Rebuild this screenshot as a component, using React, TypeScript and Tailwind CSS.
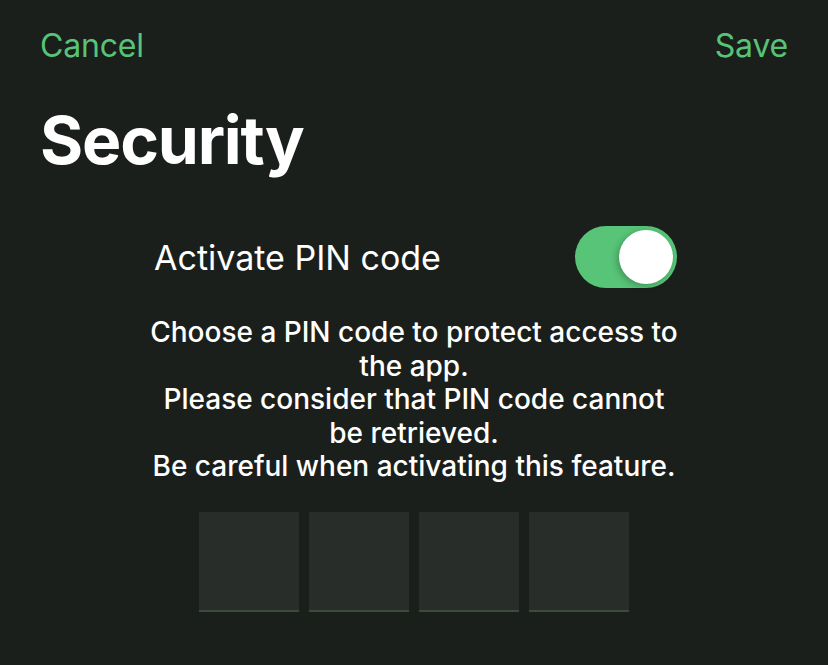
import React from "react";

export default function App() {
  const font = { fontFamily: "Inter, 'Noto Sans', sans-serif" };
  return (
    <div className="w-[828px] h-[665px] bg-[#1b1f1c] text-white overflow-hidden" style={font}>
      <div className="flex justify-between items-center px-10 pt-[28px] h-[64px]">
        <span className="text-[32px] text-[#57c477] tracking-[-0.2px]">Cancel</span>
        <span className="text-[32px] text-[#57c477] tracking-[-0.2px]">Save</span>
      </div>
      <h1 className="px-10 mt-[38px] text-[66px] font-bold leading-[76px] tracking-[-1.2px]">Security</h1>
      <div className="flex flex-col items-center mt-[48px]">
        <div className="w-[523px] flex items-center justify-between ml-[3px]">
          <span className="text-[34px] tracking-[0px]">Activate PIN code</span>
          <div className="w-[102px] h-[62px] rounded-full bg-[#57c477] flex items-center justify-end pr-[4px]">
            <div className="w-[54px] h-[54px] rounded-full bg-white shadow-[-2px_2px_6px_rgba(0,0,0,0.25)]" />
          </div>
        </div>
        <p className="mt-[28px] text-center text-[28px] font-medium leading-[33.5px]">
          Choose a PIN code to protect access to
          <br />
          the app.
          <br />
          Please consider that PIN code cannot
          <br />
          be retrieved.
          <br />
          Be careful when activating this feature.
        </p>
        <div className="flex gap-[10px] mt-[28px]">
          {[0, 1, 2, 3].map((i) => (
            <div key={i} className="w-[100px] h-[100px] bg-[#282d29] border-b-2 border-[#3d4a3c]" />
          ))}
        </div>
      </div>
    </div>
  );
}
